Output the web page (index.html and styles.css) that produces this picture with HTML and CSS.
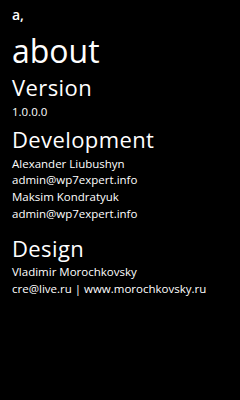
FILE: index.html
```html
<!DOCTYPE html>
<html lang="en">
<head>
    <meta charset="UTF-8">
    <meta name="viewport" content="width=device-width, initial-scale=1.0">
    <title>about</title>
    <link rel="stylesheet" href="styles.css">
</head>
<body>
    <div class="page">
        <!-- app name -->
        <div class="app-title">a,</div>
        <h1 class="page-title">about</h1>

        <section class="block">
            <h2>Version</h2>
            <p>1.0.0.0</p>
        </section>

        <section class="block">
            <h2>Development</h2>
            <p>Alexander Liubushyn</p>
            <p>admin@wp7expert.info</p>
            <p>Maksim Kondratyuk</p>
            <p>admin@wp7expert.info</p>
        </section>

        <section class="block design">
            <h2>Design</h2>
            <p>Vladimir Morochkovsky</p>
            <p>cre@live.ru | www.morochkovsky.ru</p>
        </section>
    </div>
</body>
</html>
```
FILE: styles.css
```css
body {
    margin: 0;
    padding: 0;
    background-color: #000;
    color: #fff;
    font-family: "Open Sans", "Noto Sans", sans-serif;
}
.page {
    padding: 7px 0 0 12px;
}
.app-title {
    font-size: 14px;
    font-weight: 600;
    line-height: 16px;
}
.page-title {
    margin: 7px 0 0 0;
    font-size: 32px;
    font-weight: normal;
    line-height: 42px;
}
.block {
    margin-top: 4px;
}
.block:first-of-type {
    margin-top: 0;
}
.block h2 {
    margin: 0;
    font-size: 22px;
    font-weight: normal;
    line-height: 31.5px;
    letter-spacing: 0.4px;
}
.block p {
    margin: 0;
    font-size: 11.5px;
    line-height: 16.7px;
}
.design {
    margin-top: 10px;
}
```
